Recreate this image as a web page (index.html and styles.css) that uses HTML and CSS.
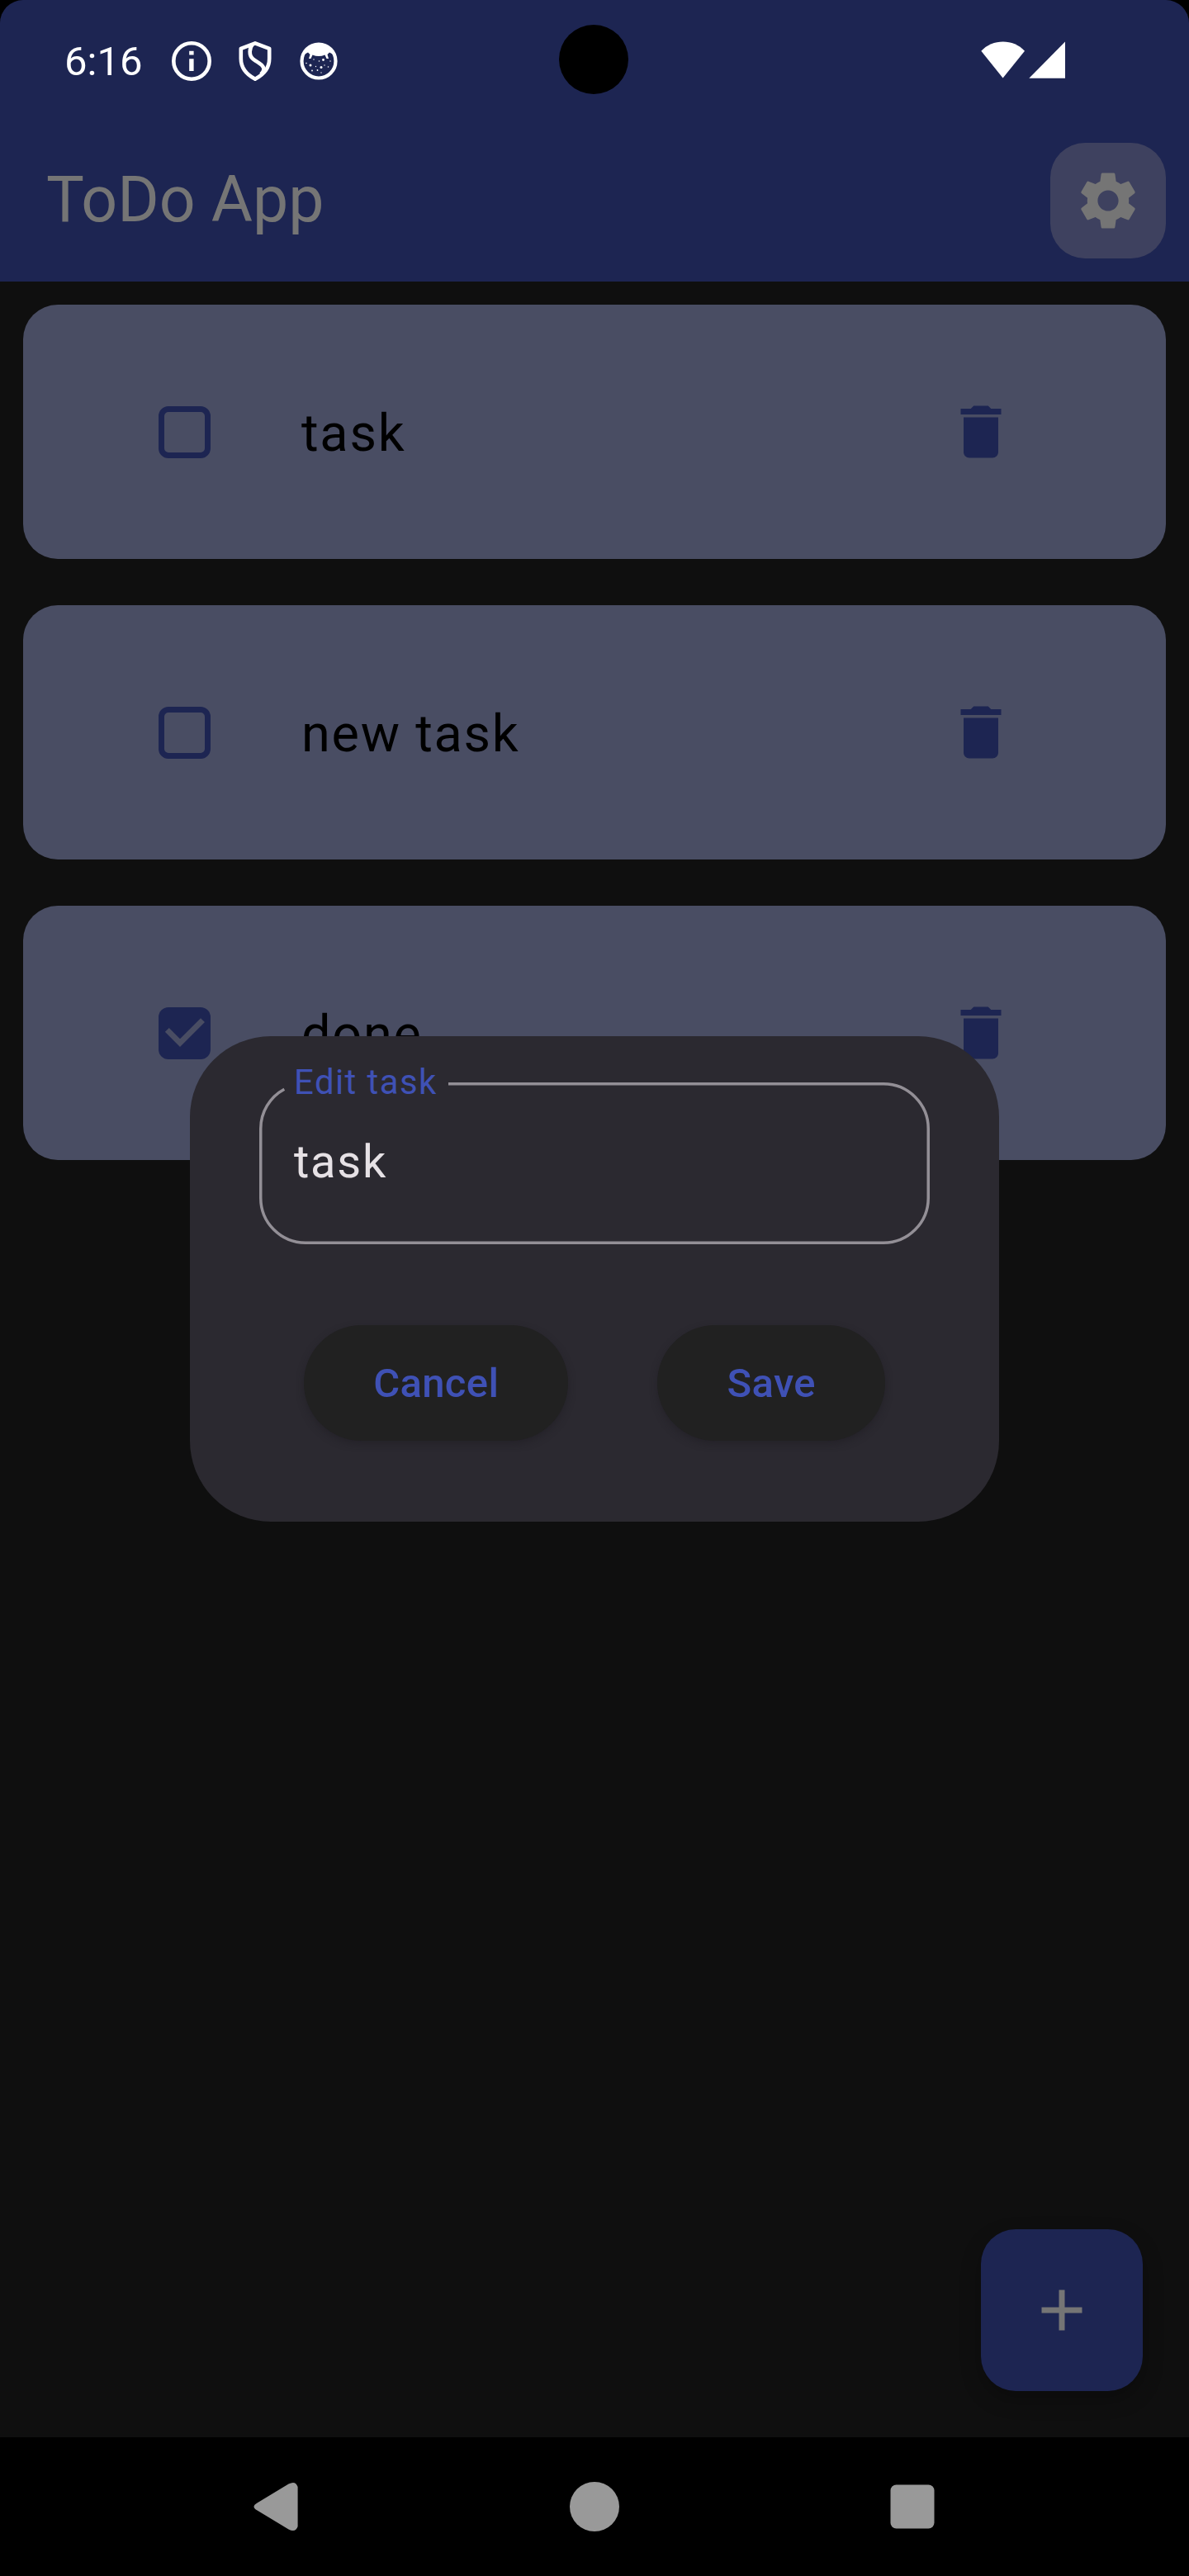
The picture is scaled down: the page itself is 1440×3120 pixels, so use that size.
FILE: index.html
```html
<!DOCTYPE html>
<html lang="en">
<head>
<meta charset="utf-8">
<title>ToDo App</title>
<link rel="stylesheet" href="styles.css">
</head>
<body>
<svg class="defs" width="0" height="0" aria-hidden="true">
  <symbol id="delete" viewBox="0 0 24 24"><path d="M6 19c0 1.1.9 2 2 2h8c1.100 0 2-.9 2-2V7H6v12zM19 4h-3.500l-1-1h-5l-1 1H5v2h14V4z"/></symbol>
</svg>
<div class="phone">
  <header class="top">
    <div class="status">
      <span class="clock">6:16</span>
      <div class="notifications">
        <svg width="48" height="48" viewBox="0 0 48 48"><circle cx="24" cy="24" r="21.700" fill="none" stroke="#fff" stroke-width="4.600"/><path fill="#fff" d="M21.200 11.700h5.400v4.800h-5.400zM21.200 21.300h5.400V36h-5.400z"/></svg>
        <svg class="shield" width="40" height="48" viewBox="0 0 40 48" fill="none" stroke="#fff" stroke-width="4.600" stroke-linejoin="round"><path d="M20 2.300 37.200 8.800V21C37.200 32 31 40 20 45.700 9 40 2.800 32 2.800 21V8.800Z"/><path d="M17 3.500C13 8 12 17 17.500 21.500 23 26 30 28 30.500 33.500 30.500 36.500 29 38 27 40"/></svg>
        <svg class="face" width="46" height="46" viewBox="0 0 46 46" fill="#fff"><circle cx="23" cy="23" r="20.500" fill="none" stroke="#fff" stroke-width="4.200"/><path d="M3.500 16C8 4 15 1.500 23 1.500S38 4 42.500 16L36 12.500 33.500 15 35 20 32.500 20 30.500 15.500Q23 18.500 15.500 15.500L13.500 20H11L12.500 15 10 12.500Z"/><g><circle cx="13" cy="28" r="1.500"/><circle cx="28.500" cy="21.500" r="1.400"/><circle cx="26" cy="30.500" r="1.500"/><circle cx="17" cy="21" r=".7"/><circle cx="23.500" cy="23" r=".8"/><circle cx="19.500" cy="29.500" r=".7"/><circle cx="30" cy="28" r=".7"/><circle cx="8" cy="25.500" r=".8"/><circle cx="15" cy="34.500" r=".9"/><circle cx="21.500" cy="34" r=".9"/><circle cx="26" cy="37" r=".7"/><circle cx="34.500" cy="30" r=".8"/><circle cx="37" cy="23" r=".7"/></g></svg>
      </div>
      <div class="signals">
        <svg width="54" height="46" viewBox="0 0 54 46"><path fill="#fff" d="M.3 11.800C14-3.300 39.500-3.300 53 11.800L26.600 44.600Z"/></svg>
        <svg width="45" height="46" viewBox="0 0 45 46"><path fill="#fff" d="M.3 44.700 44 .5V44.700Z"/></svg>
      </div>
    </div>
    <div class="appbar">
      <h1 class="title">ToDo App</h1>
      <button class="settings" aria-label="Settings"><svg width="84" height="84" viewBox="0 0 24 24" fill="currentColor"><path d="M19.140 12.940c.04-.3.06-.61.06-.94 0-.32-.02-.64-.07-.94l2.030-1.580c.18-.14.23-.41.12-.61l-1.920-3.320c-.12-.22-.37-.29-.59-.22l-2.390.96c-.5-.38-1.030-.7-1.620-.94l-.36-2.540c-.04-.24-.24-.41-.48-.41h-3.840c-.24 0-.43.17-.47.41l-.36 2.540c-.59.24-1.130.57-1.620.94l-2.390-.96c-.22-.08-.47 0-.59.22L2.740 8.870c-.12.21-.08.47.12.61l2.030 1.580c-.05.3-.09.63-.09.94s.02.64.07.94l-2.030 1.580c-.18.14-.23.41-.12.61l1.920 3.320c.12.22.37.29.59.22l2.390-.96c.5.38 1.030.7 1.620.94l.36 2.540c.05.24.24.41.48.41h3.840c.24 0 .44-.17.47-.41l.36-2.540c.59-.24 1.130-.56 1.620-.94l2.390.96c.22.08.47 0 .59-.22l1.920-3.320c.12-.22.07-.47-.12-.61l-2.010-1.580zM12 15.600c-1.980 0-3.600-1.620-3.600-3.600s1.620-3.600 3.600-3.600 3.600 1.620 3.600 3.600-1.620 3.600-3.600 3.600z"/></svg></button>
    </div>
    <div class="cutout"></div>
  </header>
  <main class="list">
    <article class="card"><span class="box"></span><span class="name">task</span><svg class="trash"><use href="#delete"/></svg></article>
    <article class="card"><span class="box"></span><span class="name">new task</span><svg class="trash"><use href="#delete"/></svg></article>
    <article class="card"><span class="box checked"><svg width="63" height="63" viewBox="0 0 63 63"><path d="M10.300 27.400 26 43.100 53.500 15.600" fill="none" stroke="#494d63" stroke-width="7"/></svg></span><span class="name">done</span><svg class="trash"><use href="#delete"/></svg></article>
    <button class="fab" aria-label="Add task"><svg width="84" height="84" viewBox="0 0 24 24" fill="currentColor"><path d="M19 13h-6v6h-2v-6H5v-2h6V5h2v6h6v2z"/></svg></button>
  </main>
  <section class="dialog" role="dialog">
    <div class="field">
      <svg class="outline" width="812" height="196" viewBox="0 0 812 196"><path d="M229 1.750H756A54.250 54.250 0 0 1 810.250 56V140A54.250 54.250 0 0 1 756 194.250H56A54.250 54.250 0 0 1 1.750 140V56A54.250 54.250 0 0 1 30.300 8.200" fill="none" stroke="#938f96" stroke-width="3.500"/></svg>
      <span class="label">Edit task</span>
      <span class="value">task</span>
    </div>
    <div class="actions"><button class="pill cancel">Cancel</button><button class="pill save">Save</button></div>
  </section>
  <nav class="nav">
    <svg width="60" height="60" viewBox="0 0 60 60"><path d="M6.500 25.500 44.500 2.500Q53-2 55.600 6V54Q53 62 44.500 57.500L6.500 34.500Q-1.500 30 6.500 25.500Z"/></svg>
    <svg width="60" height="60" viewBox="0 0 60 60"><circle cx="30" cy="30" r="30"/></svg>
    <svg width="60" height="60" viewBox="0 0 60 60"><rect x="3.500" y="3.500" width="53" height="53" rx="7"/></svg>
  </nav>
</div>
</body>
</html>
```
FILE: styles.css
```css
* { box-sizing: border-box; }
body { margin: 0; background: #000; font-family: Roboto, "Liberation Sans", sans-serif; }
svg { display: block; flex: none; }
button { border: 0; padding: 0; font: inherit; display: flex; align-items: center; justify-content: center; }
.defs { position: absolute; }
.phone { position: relative; width: 1440px; height: 3120px; display: flex; flex-direction: column; overflow: hidden; }

.top { position: relative; height: 341px; background: #1d2552; border-radius: 28px 28px 0 0; }
.status { height: 145px; display: flex; align-items: flex-start; padding: 50px 149px 0 78px; color: #fff; }
.clock { font-size: 49px; line-height: 50px; width: 130px; white-space: nowrap; }
.notifications { display: flex; gap: 33px; }
.face { margin: 1px 0 0 1px; }
.signals { display: flex; gap: 4px; margin-left: auto; }
.cutout { position: absolute; left: 677px; top: 30px; width: 84px; height: 84px; border-radius: 50%; background: #000; }
.appbar { height: 196px; display: flex; align-items: center; justify-content: space-between; padding: 0 28px 0 56px; color: #757575; }
.title { margin: 0; padding-bottom: 3px; font-size: 77px; font-weight: 400; line-height: 98px; }
.settings { width: 140px; height: 140px; border-radius: 42px; background: #3e415f; color: #757575; }

.list { position: relative; flex: 1; background: #0f0f0f; padding: 28px; display: flex; flex-direction: column; gap: 56px; }
.card { height: 308px; border-radius: 42px; background: #494d63; display: flex; align-items: center; padding: 0 182px 0 164px; }
.box { width: 63px; height: 63px; border: 7px solid #1d2552; border-radius: 12px; }
.checked { border: 0; background: #1d2552; }
.name { flex: 1; margin-left: 110px; padding-top: 3px; font-size: 63px; line-height: 84px; letter-spacing: 1.75px; color: #000; }
.trash { width: 84px; height: 84px; fill: #1d2552; }
.fab { position: absolute; right: 56px; bottom: 56px; width: 196px; height: 196px; border-radius: 42px; background: #1d2552; color: #757575; box-shadow: 0 10px 24px rgba(0, 0, 0, .25); }

.dialog { position: absolute; left: 230px; top: 1255px; width: 980px; height: 588px; padding: 56px 84px; border-radius: 98px; background: #2b2930; }
.field { position: relative; height: 196px; padding: 54px 42px; color: #e6e1e5; }
.outline { position: absolute; left: 0; top: 0; }
.label { position: absolute; left: 42px; top: -28px; font-size: 42px; line-height: 56px; letter-spacing: 1.4px; color: #3f51b5; white-space: nowrap; }
.value { display: block; font-size: 56px; line-height: 84px; letter-spacing: 1.75px; }
.actions { display: flex; justify-content: space-around; margin-top: 98px; }
.pill { height: 140px; padding: 0 84px; border-radius: 70px; background: #212121; color: #3f51b5; font-size: 49px; font-weight: 500; letter-spacing: .35px; box-shadow: 0 4px 8px rgba(30, 28, 34, .5); }

.nav { height: 168px; display: flex; align-items: center; justify-content: center; gap: 325px; background: #000; fill: #999; }
```
